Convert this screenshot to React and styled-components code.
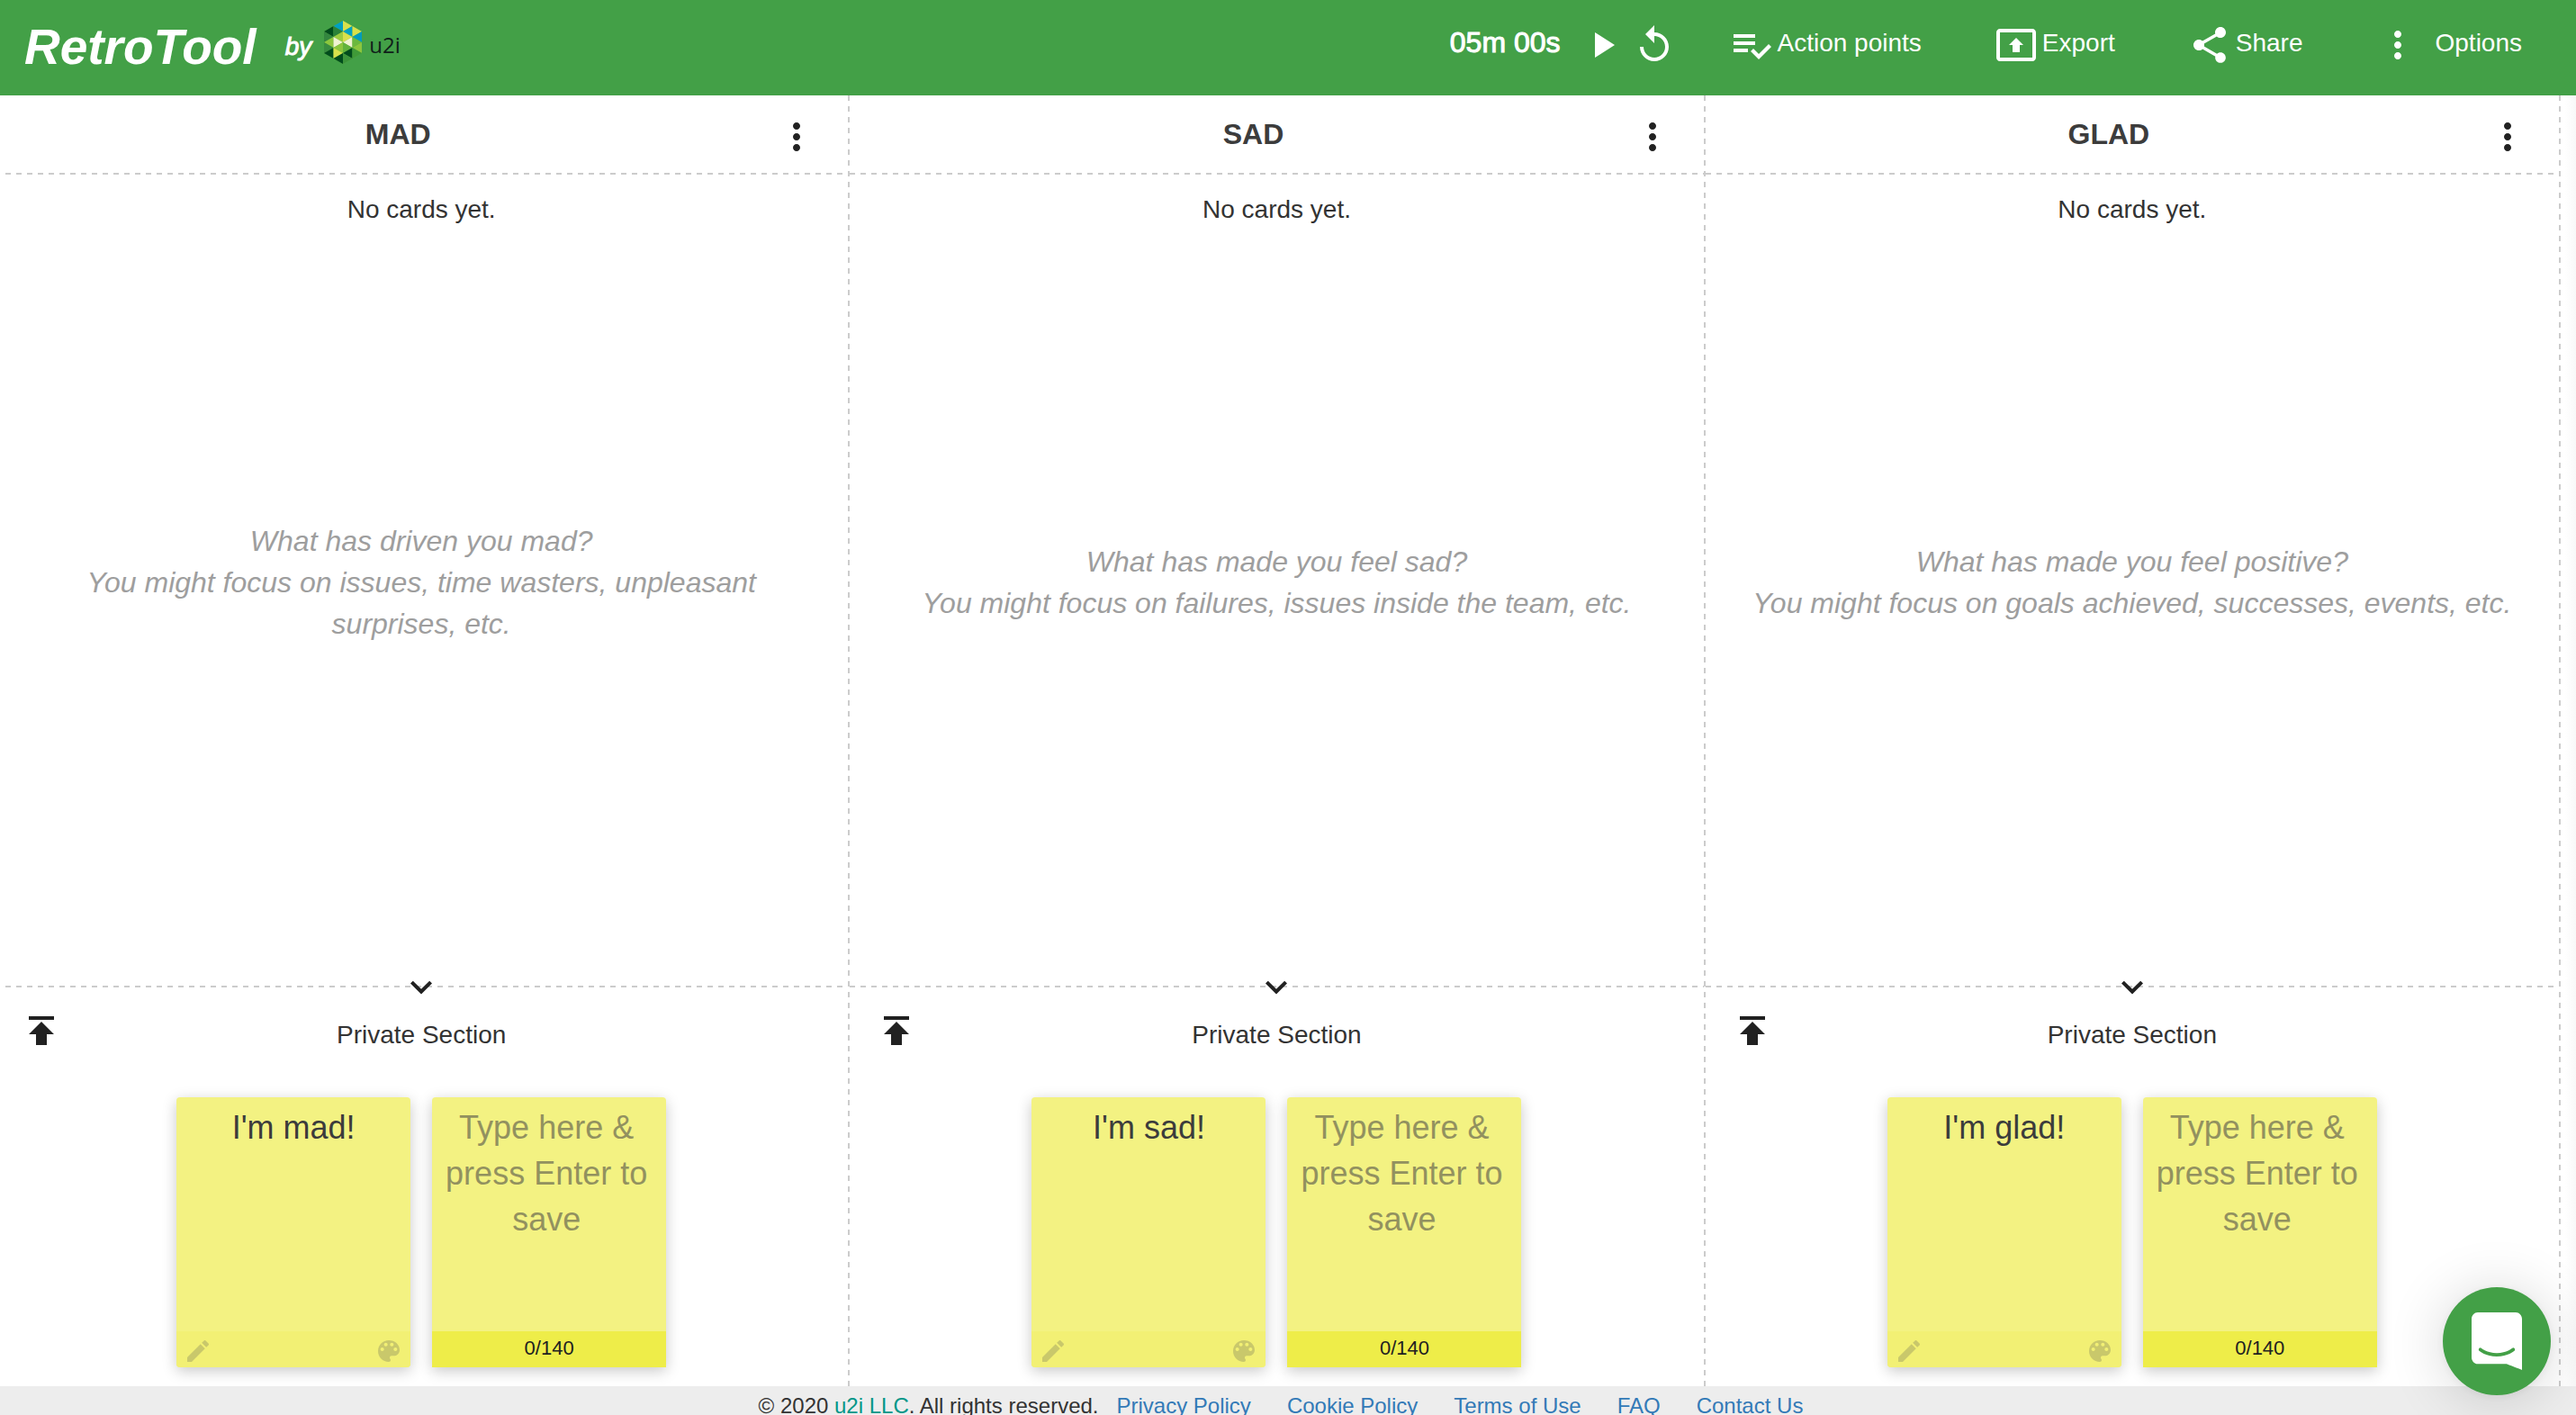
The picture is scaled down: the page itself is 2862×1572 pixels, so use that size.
import React, { useState } from "react";
import styled, { createGlobalStyle } from "styled-components";

const GlobalStyle = createGlobalStyle`
  * {
    box-sizing: border-box;
  }
  body {
    margin: 0;
    background: #fff;
    color: #333;
    font-family: "Helvetica Neue", "Liberation Sans", Arial, sans-serif;
    font-size: 28px;
    line-height: 40px;
  }
  button,
  textarea {
    margin: 0;
    padding: 0;
    border: 0;
    background: none;
    color: inherit;
    font: inherit;
  }
  button {
    cursor: pointer;
  }
  a {
    color: inherit;
    text-decoration: none;
  }
`;

const Page = styled.div`
  display: flex;
  flex-direction: column;
  height: 100vh;
  overflow: hidden;
`;

const TopBar = styled.header`
  display: flex;
  justify-content: space-between;
  align-items: flex-start;
  height: 106px;
  padding: 0 60px 0 27px;
  flex: none;
  background: #43a047;
  color: #fff;
`;

const Brand = styled.div`
  display: flex;
  align-items: center;
  padding-top: 20px;
`;

const BrandName = styled.h1`
  margin: 0 32px 0 0;
  font-size: 55px;
  line-height: 64px;
  font-weight: 700;
  font-style: italic;
`;

const By = styled.span`
  margin-right: 14px;
  font-style: italic;
  -webkit-text-stroke: 1px currentColor;
`;

const CompanyLink = styled.a`
  display: flex;
  align-items: center;
  gap: 8px;
  padding-bottom: 10px;
`;

const CompanyName = styled.span`
  padding-top: 6px;
  color: #10201a;
  font-family: "Open Sans", "Liberation Sans", sans-serif;
  font-size: 24px;
  font-weight: 400;
`;

const Toolbar = styled.div`
  display: flex;
  align-items: flex-start;
  gap: 60px;
  padding-top: 26px;
`;

const Timer = styled.div`
  display: flex;
  gap: 10px;
`;

const Time = styled.span`
  margin-right: 12px;
  font-size: 32px;
  line-height: 42px;
  -webkit-text-stroke: 1px currentColor;
`;

const Nav = styled.nav`
  display: flex;
  gap: 81px;
`;

const NavButton = styled.button`
  display: flex;
  align-items: flex-start;
  gap: ${({ $wide }) => ($wide ? "18px" : "5px")};
  line-height: 44px;
`;

const IconButton = styled.button`
  display: flex;
  align-items: center;
  justify-content: center;
`;

const Icon = styled.svg.attrs({ viewBox: "0 0 24 24", "aria-hidden": true })`
  display: block;
  flex: none;
  width: ${({ $size }) => $size || 48}px;
  height: ${({ $size }) => $size || 48}px;
  fill: currentColor;
`;

const Board = styled.main`
  display: flex;
  flex: 1;
  min-height: 0;
  padding-right: 17px;
  margin-left: -6px;
  background: linear-gradient(to left, #f8f8f8, #fff 12px);
`;

const dashes = (direction) =>
  `repeating-linear-gradient(${direction}, #ccc 0 6px, transparent 6px 12px)`;

const Column = styled.section`
  display: flex;
  flex-direction: column;
  flex: 1;
  min-width: 0;
  padding-right: 2px;
  background: ${dashes("to bottom")} top right / 2px 100% no-repeat;
`;

const ColumnHeader = styled.div`
  display: flex;
  align-items: center;
  height: 88px;
  padding: 0 32px 2px 30px;
  flex: none;
  background: ${dashes("to right")} bottom left / 100% 2px no-repeat;
`;

const ColumnTitle = styled.h2`
  flex: 1;
  margin: 0;
  color: #3c3c3c;
  font-size: 32px;
  font-weight: 700;
  text-align: center;
`;

const ColumnMenu = styled(IconButton)`
  width: 50px;
  padding-top: 6px;
  color: #212121;
`;

const Empty = styled.p`
  margin: 0;
  padding-top: 19px;
  text-align: center;
`;

const Hint = styled.div`
  display: flex;
  flex: 1;
  flex-direction: column;
  justify-content: center;
  padding: 0 40px 54px;
  color: #9e9e9e;
  font-size: 32px;
  font-style: italic;
  line-height: 46px;
  text-align: center;

  p {
    margin: 0;
  }
`;

const Private = styled.div`
  position: relative;
  flex: none;
  padding: 26px 28px 21px;
  background: ${dashes("to right")} top left / 100% 2px no-repeat;
`;

const Collapse = styled(IconButton)`
  position: absolute;
  top: -21px;
  left: 50%;
  margin-left: -24px;
  color: #212121;
`;

const PrivateHeader = styled.div`
  display: grid;
  grid-template-columns: 1fr auto 1fr;
  align-items: start;
  justify-items: start;
  margin-bottom: 50px;
`;

const Publish = styled(IconButton)`
  color: #212121;
`;

const PrivateTitle = styled.h3`
  margin: 0;
  padding-top: 8px;
  font-size: 28px;
  line-height: 42px;
  font-weight: 400;
  height: 48px;
`;

const Cards = styled.div`
  display: flex;
  justify-content: center;
  gap: 24px;
`;

const Card = styled.article`
  display: flex;
  flex-direction: column;
  width: 260px;
  height: 300px;
  border-radius: ${({ $draft }) => ($draft ? "4px 4px 0 0" : "4px")};
  background: #f3f282;
  box-shadow: 0 4px 16px rgba(0, 0, 0, 0.22);
  font-size: 36px;
  line-height: 51px;
  text-align: center;
`;

const CardText = styled.p`
  flex: 1;
  margin: 0;
  padding: 8px;
  color: #3c3c3c;
`;

const CardInput = styled.textarea`
  flex: 1;
  width: 100%;
  padding: 8px 14px 8px 8px;
  outline: 0;
  resize: none;
  overflow: hidden;
  text-align: center;

  &::placeholder {
    color: #92915f;
    opacity: 1;
  }
`;

const CardActions = styled.div`
  display: flex;
  justify-content: space-between;
  align-items: flex-start;
  height: 40px;
  padding: 6px 8px 0;
  border-radius: 0 0 4px 4px;
  background: #f2f074;
  color: #c9c86b;
`;

const Counter = styled.div`
  height: 40px;
  background: #eeed49;
  color: #212121;
  font-size: 22px;
  line-height: 38px;
`;

const Footer = styled.footer`
  display: flex;
  justify-content: center;
  height: 32px;
  padding: 2px 0 0 4px;
  flex: none;
  background: #ededed;
  font-size: 24px;
`;

const CompanyRef = styled.a`
  color: #009688;
`;

const FooterLink = styled.a`
  padding: 0 20px;
  color: #337ab7;
`;

const ChatLauncher = styled.button`
  position: fixed;
  right: 28px;
  bottom: 22px;
  display: flex;
  align-items: center;
  justify-content: center;
  width: 120px;
  height: 120px;
  border-radius: 50%;
  background: #43a047;
  color: #fff;
  box-shadow: 0 2px 12px rgba(0, 0, 0, 0.06), 0 4px 64px rgba(0, 0, 0, 0.16);
`;

const icons = {
  play: "M8 5v14l11-7z",
  replay:
    "M12 5V1L7 6l5 5V7c3.31 0 6 2.69 6 6s-2.69 6-6 6-6-2.69-6-6H4c0 4.42 3.58 8 8 8s8-3.58 8-8-3.58-8-8-8z",
  list: "M14 10H2v2h12v-2zm0-4H2v2h12V6zM2 16h8v-2H2v2zm19.5-4.5L23 13l-6.99 7-4.51-4.5L13 14l3.01 3 5.49-5.5z",
  exportBox:
    "M21 3H3c-1.11 0-2 .89-2 2v14c0 1.11.89 2 2 2h18c1.11 0 2-.89 2-2V5c0-1.11-.89-2-2-2zm0 16.02H3V4.98h18v14.04zM10 12H8l4-4 4 4h-2v4h-4v-4z",
  share:
    "M18 16.08c-.76 0-1.44.3-1.96.77L8.91 12.7c.05-.23.09-.46.09-.7s-.04-.47-.09-.7l7.05-4.11c.54.5 1.25.81 2.04.81 1.66 0 3-1.34 3-3s-1.34-3-3-3-3 1.34-3 3c0 .24.04.47.09.7L8.04 9.81C7.5 9.31 6.79 9 6 9c-1.66 0-3 1.34-3 3s1.34 3 3 3c.79 0 1.5-.31 2.04-.81l7.12 4.16c-.05.21-.08.43-.08.65 0 1.61 1.31 2.92 2.92 2.92 1.61 0 2.92-1.31 2.92-2.92s-1.31-2.92-2.92-2.92z",
  more: "M12 8c1.1 0 2-.9 2-2s-.9-2-2-2-2 .9-2 2 .9 2 2 2zm0 2c-1.1 0-2 .9-2 2s.9 2 2 2 2-.9 2-2-.9-2-2-2zm0 6c-1.1 0-2 .9-2 2s.9 2 2 2 2-.9 2-2-.9-2-2-2z",
  down: "M7.41 7.84L12 12.42l4.59-4.58L18 9.25l-6 6-6-6z",
  publish: "M5 4v2h14V4H5zm0 10h4v6h6v-6h4l-7-7-7 7z",
  edit: "M3 17.25V21h3.75L17.81 9.94l-3.75-3.75L3 17.25zM20.71 7.04c.39-.39.39-1.02 0-1.41l-2.34-2.34c-.39-.39-1.02-.39-1.41 0l-1.83 1.83 3.75 3.75 1.83-1.83z",
  palette:
    "M12 3c-4.97 0-9 4.03-9 9s4.03 9 9 9c.83 0 1.5-.67 1.5-1.5 0-.39-.15-.74-.39-1.01-.23-.26-.38-.61-.38-.99 0-.83.67-1.5 1.5-1.5H16c2.76 0 5-2.24 5-5 0-4.42-4.03-8-9-8zm-5.5 9c-.83 0-1.5-.67-1.5-1.5S5.67 9 6.5 9 8 9.67 8 10.5 7.33 12 6.5 12zm3-4C8.67 8 8 7.33 8 6.5S8.67 5 9.5 5s1.5.67 1.5 1.5S10.33 8 9.5 8zm5 0c-.83 0-1.5-.67-1.5-1.5S13.67 5 14.5 5s1.5.67 1.5 1.5S15.33 8 14.5 8zm3 4c-.83 0-1.5-.67-1.5-1.5S16.67 9 17.5 9s1.5.67 1.5 1.5-.67 1.5-1.5 1.5z",
};

function Glyph({ name, size }) {
  return (
    <Icon $size={size}>
      <path d={icons[name]} />
    </Icon>
  );
}

// Triangles of the hexagonal mark, column by column from the left.
const facets = [
  ["0,24 21,12 21,36", "#004c1c"],
  ["0,24 0,48 21,36", "#33863f"],
  ["0,48 21,36 21,60", "#8cc63e"],
  ["0,48 0,72 21,60", "#388c40"],
  ["0,72 21,60 21,84", "#004c1c"],
  ["21,12 42,0 42,24", "#00a0c2"],
  ["21,12 21,36 42,24", "#2a8139"],
  ["21,36 42,24 42,48", "#9ccb40"],
  ["21,36 21,60 42,48", "#f0f3d2"],
  ["21,60 42,48 42,72", "#8cc63e"],
  ["21,60 21,84 42,72", "#d7e04c"],
  ["21,84 42,72 42,96", "#004c1c"],
  ["42,0 42,24 63,12", "#d7e04c"],
  ["42,24 63,12 63,36", "#00a0c2"],
  ["42,24 42,48 63,36", "#d7e04c"],
  ["42,48 63,36 63,60", "#f0f3d2"],
  ["42,48 42,72 63,60", "#62b33c"],
  ["42,72 63,60 63,84", "#004c1c"],
  ["42,72 42,96 63,84", "#3b933a"],
  ["63,12 63,36 84,24", "#d7e04c"],
  ["63,36 84,24 84,48", "#009bbd"],
  ["63,36 63,60 84,48", "#6cb83d"],
  ["63,60 84,48 84,72", "#8cc63e"],
  ["63,60 63,84 84,72", "#3f9a38"],
];

// Outline under the facets, so that no background shows along their shared edges.
function HexMark() {
  return (
    <svg width="42" height="48" viewBox="0 0 84 96" aria-hidden="true">
      <polygon points="42,0 84,24 84,72 42,96 0,72 0,24" fill="#5aa83c" />
      {facets.map(([points, fill]) => (
        <polygon key={points} points={points} fill={fill} />
      ))}
    </svg>
  );
}

const columns = [
  {
    title: "MAD",
    question: "What has driven you mad?",
    focus: "You might focus on issues, time wasters, unpleasant surprises, etc.",
    card: "I'm mad!",
  },
  {
    title: "SAD",
    question: "What has made you feel sad?",
    focus: "You might focus on failures, issues inside the team, etc.",
    card: "I'm sad!",
  },
  {
    title: "GLAD",
    question: "What has made you feel positive?",
    focus: "You might focus on goals achieved, successes, events, etc.",
    card: "I'm glad!",
  },
];

const links = ["Privacy Policy", "Cookie Policy", "Terms of Use", "FAQ", "Contact Us"];

function DraftCard({ column }) {
  const [text, setText] = useState("");
  return (
    <Card $draft>
      <CardInput
        aria-label={`New ${column} card`}
        placeholder="Type here & press Enter to save"
        maxLength={140}
        value={text}
        onChange={(e) => setText(e.target.value)}
      />
      <Counter>{text.length}/140</Counter>
    </Card>
  );
}

function RetroColumn({ title, question, focus, card }) {
  return (
    <Column>
      <ColumnHeader>
        <ColumnTitle>{title}</ColumnTitle>
        <ColumnMenu aria-label={`${title} menu`}>
          <Glyph name="more" />
        </ColumnMenu>
      </ColumnHeader>
      <Empty>No cards yet.</Empty>
      <Hint>
        <p>{question}</p>
        <p>{focus}</p>
      </Hint>
      <Private>
        <Collapse aria-label="Collapse private section">
          <Glyph name="down" />
        </Collapse>
        <PrivateHeader>
          <Publish aria-label="Publish cards">
            <Glyph name="publish" />
          </Publish>
          <PrivateTitle>Private Section</PrivateTitle>
        </PrivateHeader>
        <Cards>
          <Card>
            <CardText>{card}</CardText>
            <CardActions>
              <IconButton aria-label="Edit card">
                <Glyph name="edit" size={32} />
              </IconButton>
              <IconButton aria-label="Card colour">
                <Glyph name="palette" size={32} />
              </IconButton>
            </CardActions>
          </Card>
          <DraftCard column={title} />
        </Cards>
      </Private>
    </Column>
  );
}

export default function App() {
  return (
    <Page>
      <GlobalStyle />
      <TopBar>
        <Brand>
          <BrandName>RetroTool</BrandName>
          <By>by</By>
          <CompanyLink href="#u2i">
            <HexMark />
            <CompanyName>u2i</CompanyName>
          </CompanyLink>
        </Brand>
        <Toolbar>
          <Timer>
            <Time>05m 00s</Time>
            <IconButton aria-label="Start timer">
              <Glyph name="play" />
            </IconButton>
            <IconButton aria-label="Reset timer">
              <Glyph name="replay" />
            </IconButton>
          </Timer>
          <Nav>
            <NavButton>
              <Glyph name="list" />
              Action points
            </NavButton>
            <NavButton>
              <Glyph name="exportBox" />
              Export
            </NavButton>
            <NavButton>
              <Glyph name="share" />
              Share
            </NavButton>
            <NavButton $wide>
              <Glyph name="more" />
              Options
            </NavButton>
          </Nav>
        </Toolbar>
      </TopBar>
      <Board>
        {columns.map((column) => (
          <RetroColumn key={column.title} {...column} />
        ))}
      </Board>
      <Footer>
        <span>
          © 2020 <CompanyRef href="#u2i">u2i LLC</CompanyRef>. All rights reserved.
        </span>
        {links.map((label) => (
          <FooterLink key={label} href="#legal">
            {label}
          </FooterLink>
        ))}
      </Footer>
      <ChatLauncher aria-label="Open chat">
        <svg width="56" height="64" viewBox="0 0 28 32" fill="currentColor" aria-hidden="true">
          <path d="M28 32s-4.714-1.855-8.527-3.34H3.437C1.54 28.66 0 27.026 0 25.013V3.644C0 1.633 1.54 0 3.437 0h21.125c1.898 0 3.437 1.632 3.437 3.645v18.404H28V32zm-4.139-11.982a.88.88 0 00-1.292-.105c-.03.026-3.015 2.681-8.57 2.681-5.486 0-8.517-2.636-8.571-2.684a.88.88 0 00-1.29.107 1.01 1.01 0 00-.219.708.992.992 0 00.318.664c.142.128 3.537 3.15 9.762 3.15 6.226 0 9.621-3.022 9.763-3.15a.992.992 0 00.317-.664 1.01 1.01 0 00-.218-.707z" />
        </svg>
      </ChatLauncher>
    </Page>
  );
}
